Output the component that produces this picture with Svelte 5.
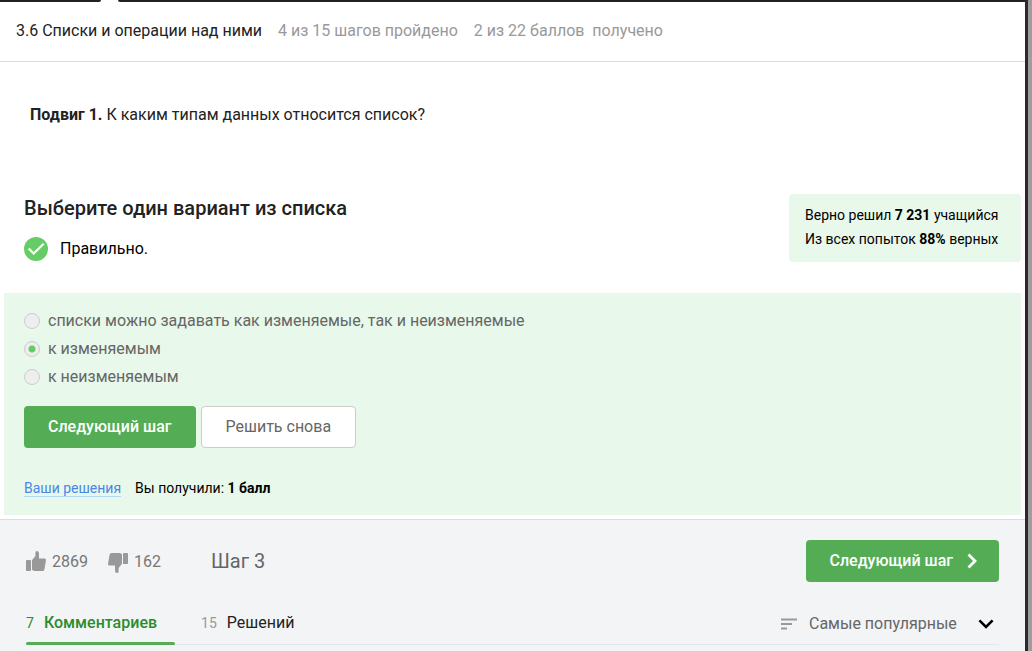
<script>
  const options = [
    { id: 'mixed', label: 'списки можно задавать как изменяемые, так и неизменяемые' },
    { id: 'mutable', label: 'к изменяемым' },
    { id: 'immutable', label: 'к неизменяемым' }
  ];
  let answer = $state('mutable');
  let tab = $state('comments');
</script>

<div class="window">
  <div class="page">
    <div class="strip">
      <span class="before"></span>
      <span class="after"></span>
    </div>

    <header class="lesson">
      <span class="title">3.6 Списки и операции над ними</span>
      <span>4 из 15 шагов пройдено</span>
      <span>2 из 22 баллов &nbsp;получено</span>
    </header>

    <main>
      <p class="question"><b>Подвиг 1.</b> К каким типам данных относится список?</p>

      <section class="status">
        <div>
          <h2>Выберите один вариант из списка</h2>
          <p class="verdict">
            <svg width="24" height="24" viewBox="0 0 24 24" aria-hidden="true">
              <circle cx="12" cy="12" r="12" fill="#66cc66" />
              <path d="M4.7 11.500l5 5L19.700 6.700" fill="none" stroke="#fff" stroke-width="2.300" />
            </svg>
            Правильно.
          </p>
        </div>
        <p class="stats">
          Верно решил <b>7 231</b> учащийся<br />
          Из всех попыток <b>88%</b> верных
        </p>
      </section>

      <form class="quiz" onsubmit={(e) => e.preventDefault()}>
        <div class="options">
          {#each options as option (option.id)}
            <label>
              <input type="radio" name="answer" value={option.id} bind:group={answer} />
              {option.label}
            </label>
          {/each}
        </div>
        <div class="actions">
          <button class="btn primary" type="button">Следующий шаг</button>
          <button class="btn plain" type="button">Решить снова</button>
        </div>
        <div class="result">
          <a href="#solutions">Ваши решения</a>
          <span>Вы получили: <b>1 балл</b></span>
        </div>
      </form>
    </main>

    <footer>
      <div class="toolbar">
        <button class="vote" type="button" aria-label="Нравится, 2869">
          <svg width="20" height="24" viewBox="0 0 20 24" aria-hidden="true">
            <rect x="0" y="10" width="5" height="11" rx="0.8" />
            <path d="M6 10.200L9.400 6V2.500Q9.400 1 11 1Q13 1 13 3.500V8.500H18.600Q20 8.500 20 10L18.400 19.500Q18.100 21 16.500 21H8L6 19.700Z" />
          </svg>
          2869
        </button>
        <button class="vote" type="button" aria-label="Не нравится, 162">
          <svg width="20" height="24" viewBox="0 0 20 24" aria-hidden="true">
            <rect x="15" y="3" width="5" height="11" rx="0.8" />
            <path d="M14 13.800L10.600 18V21.500Q10.600 23 9 23Q7 23 7 20.500V15.500H1.400Q0 15.500 0 14L1.600 4.500Q1.900 3 3.500 3H12L14 4.300Z" />
          </svg>
          162
        </button>
        <span class="step">Шаг 3</span>
        <button class="btn primary next" type="button">
          Следующий шаг
          <svg width="10" height="16" viewBox="0 0 10 16" aria-hidden="true">
            <path d="M1.500 1.500L8 8L1.500 14.500" fill="none" stroke="#fff" stroke-width="2.800" />
          </svg>
        </button>
      </div>

      <div class="tabs">
        <button class="tab" class:active={tab === 'comments'} type="button" onclick={() => (tab = 'comments')}>
          <small>7</small>Комментариев
        </button>
        <button class="tab" class:active={tab === 'solutions'} type="button" onclick={() => (tab = 'solutions')}>
          <small>15</small>Решений
        </button>
        <div class="sort">
          <svg width="16" height="12" viewBox="0 0 16 12" aria-hidden="true">
            <path d="M0 1.500H16M0 6H11M0 10.500H6" stroke="#999" stroke-width="1.800" />
          </svg>
          <select aria-label="Сортировка">
            <option>Самые популярные</option>
          </select>
          <svg class="caret" width="16" height="10" viewBox="0 0 16 10" aria-hidden="true">
            <path d="M1.400 1.400L8 8L14.600 1.400" fill="none" stroke="#000" stroke-width="2.600" />
          </svg>
        </div>
      </div>
    </footer>
  </div>
</div>

<style>
  :global(body) {
    margin: 0;
  }
  .window {
    border-right: 4px solid #9e9c9d;
    font: 16px/24px Roboto, sans-serif;
    color: #222;
  }
  .page {
    display: flex;
    flex-direction: column;
    box-sizing: border-box;
    min-height: 100vh;
    border-right: 3px solid #2a2a2c;
    background: #fff;
  }
  p,
  h2 {
    margin: 0;
  }
  b {
    font-weight: 700;
  }
  button,
  select {
    font: inherit;
    color: inherit;
    border: 0;
    background: none;
    padding: 0;
    cursor: pointer;
  }
  .strip {
    display: flex;
    gap: 17px;
    height: 2px;
  }
  .strip span {
    background: #222021;
  }
  .before {
    width: 101px;
    border-bottom-right-radius: 2px;
  }
  .after {
    flex: 1;
    border-bottom-left-radius: 2px;
  }
  .lesson {
    display: flex;
    gap: 16px;
    padding: 17px 16px 18px;
    border-bottom: 1px solid #dcdcdc;
    color: #999;
  }
  .title {
    color: #222;
  }
  main {
    padding: 41px 4px 4px;
  }
  .question {
    padding: 0 26px;
  }
  .status {
    display: flex;
    justify-content: space-between;
    align-items: flex-start;
    padding: 67px 0 31px 20px;
  }
  h2 {
    font-size: 20px;
    line-height: 28px;
    font-weight: 500;
  }
  .verdict {
    display: flex;
    align-items: center;
    gap: 12px;
    margin-top: 14px;
    color: #000;
    line-height: 26px;
  }
  .stats {
    min-width: 200px;
    padding: 9px 16px 11px;
    border-radius: 4px;
    background: #e8f8ea;
    color: #000;
    font-size: 14px;
  }
  .quiz {
    padding: 16px 20px 15px;
    background: #e8f8ea;
  }
  .options {
    display: grid;
    gap: 4px;
    color: #666;
  }
  label {
    display: flex;
    align-items: center;
    gap: 8px;
  }
  input {
    appearance: none;
    box-sizing: border-box;
    width: 16px;
    height: 16px;
    margin: 0;
    border: 1px solid #ccc;
    border-radius: 50%;
    background: #eee;
  }
  input:checked {
    background: radial-gradient(circle, #66cc66 3px, #eee 4px);
  }
  .actions {
    display: flex;
    gap: 5px;
    margin-top: 17px;
  }
  .btn {
    box-sizing: border-box;
    height: 42px;
    padding: 0 24px;
    border-radius: 4px;
  }
  .primary {
    background: #54ad54;
    color: #fff;
    font-weight: 500;
  }
  .plain {
    border: 1px solid #ccc;
    background: #fff;
    color: #666;
  }
  .result {
    display: flex;
    align-items: center;
    gap: 14px;
    margin-top: 28px;
    color: #000;
    font-size: 14px;
  }
  .result a {
    border-bottom: 1px solid #b3d9f2;
    color: #4a86e8;
    line-height: 16px;
    text-decoration: none;
  }
  footer {
    flex: 1;
    padding: 20px 26px 0;
    border-top: 1px solid #dcdcdc;
    background: #f3f4f6;
  }
  .toolbar {
    display: flex;
    align-items: center;
  }
  .vote {
    display: flex;
    align-items: center;
    gap: 6px;
    margin-right: 20px;
    padding-top: 2px;
    color: #777;
  }
  .vote svg {
    fill: #999;
  }
  .step {
    margin-left: 30px;
    color: #666;
    font-size: 20px;
  }
  .next {
    display: flex;
    align-items: center;
    gap: 14px;
    margin-left: auto;
    padding-right: 22px;
  }
  .tabs {
    display: flex;
    gap: 26px;
    margin-top: 29px;
    border-bottom: 1px solid #e4e6ec;
  }
  .tab {
    position: relative;
    display: flex;
    align-items: baseline;
    gap: 10px;
    height: 33px;
  }
  .tab small {
    color: #999;
    font-size: 14px;
  }
  .active,
  .active small {
    color: #2c8c2c;
  }
  .active {
    padding-right: 18px;
    font-weight: 500;
  }
  .active small {
    font-weight: 400;
  }
  .active::after {
    content: '';
    position: absolute;
    inset: auto 0 -1px;
    height: 3px;
    border-radius: 2px;
    background: #54ad54;
  }
  .sort {
    display: flex;
    align-items: center;
    height: 26px;
    margin-left: auto;
    color: #666;
  }
  .sort select {
    appearance: none;
    margin: 0 -16px 0 12px;
    padding-right: 37px;
    line-height: 24px;
  }
  .caret {
    margin-right: 5px;
    pointer-events: none;
  }
</style>
